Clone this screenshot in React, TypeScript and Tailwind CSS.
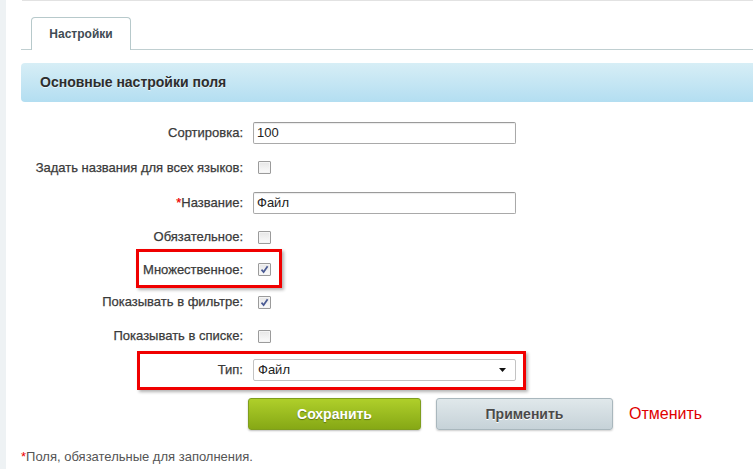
import React from "react";

function Checkbox({ checked = false }: { checked?: boolean }) {
  return (
    <div className="ml-[5px] w-[13px] h-[13px] border border-[#9b9b9b] rounded-[1px] bg-gradient-to-b from-[#e6e6e6] to-[#fbfbfb] flex items-center justify-center shadow-[inset_0_0_0_1px_#f4f4f4]">
      {checked && (
        <svg width="9" height="9" viewBox="0 0 9 9">
          <path d="M1.5 4.6 L3.6 7 L7.6 1.2" fill="none" stroke="#4a5a93" strokeWidth="1.7" />
        </svg>
      )}
    </div>
  );
}

function TextInput({ value }: { value: string }) {
  return (
    <div className="w-[263px] h-[22px] border border-[#a9a9a9] border-t-[#9a9a9a] rounded-[2px] bg-white flex items-center pl-[3px] text-[13px] text-[#222] shadow-[inset_0_1px_1px_rgba(0,0,0,0.08)]">
      {value}
    </div>
  );
}

function Row({ label, h, children, req = false }: { label: string; h: string; children: React.ReactNode; req?: boolean }) {
  return (
    <div className={`flex items-center ${h}`}>
      <div className="w-[222px] text-right text-[13px] text-[#3a3a3a] [-webkit-text-stroke:0.25px_#3a3a3a] [text-shadow:0_1px_0_#fff]">
        {req && <span className="text-[#e00] [-webkit-text-stroke:0.25px_#e00]">*</span>}
        {label}
      </div>
      <div className="ml-[10px] flex items-center">{children}</div>
    </div>
  );
}

export default function App() {
  return (
    <div className="relative flex w-[753px] h-[469px] bg-white overflow-hidden font-['Liberation_Sans',Arial,sans-serif]">
      <div className="w-[6px] bg-[#eef2f4] shrink-0" />
      <div className="flex-1 pl-[15px]">
        <div className="h-px bg-[#e2e2e2] ml-[1px]" />
        <div className="h-[49px] border-b border-[#c0cfd1] flex items-end">
          <div className="ml-[10px] w-[100px] h-[33px] -mb-px border border-b-0 border-[#b7c9cb] rounded-t-[4px] bg-white flex items-center justify-center text-[12px] font-bold text-[#3f4b54] relative">
            Настройки
          </div>
        </div>
        <div className="mt-[13px] h-[39px] rounded-l-[4px] bg-gradient-to-b from-[#d7eef6] to-[#b3def1] flex items-center pl-[19px] text-[14px] font-bold text-[#2d2d2d] [text-shadow:0_1px_0_rgba(255,255,255,0.6)]">
          Основные настройки поля
        </div>
        <div className="mt-[13px]">
          <Row label="Сортировка:" h="h-[35px]">
            <TextInput value="100" />
          </Row>
          <Row label="Задать названия для всех языков:" h="h-[35px]">
            <Checkbox />
          </Row>
          <Row label="Название:" h="h-[35px]" req>
            <TextInput value="Файл" />
          </Row>
          <Row label="Обязательное:" h="h-[34px]">
            <Checkbox />
          </Row>
          <Row label="Множественное:" h="h-[31px]">
            <Checkbox checked />
          </Row>
          <Row label="Показывать в фильтре:" h="h-[34px]">
            <Checkbox checked />
          </Row>
          <Row label="Показывать в списке:" h="h-[34px]">
            <Checkbox />
          </Row>
          <Row label="Тип:" h="h-[34px]">
            <div className="w-[263px] h-[22px] border border-[#c3c3c3] rounded-[2px] bg-white flex items-center justify-between pl-[4px] pr-[9px] text-[13px] text-[#222]">
              <span>Файл</span>
              <svg width="7" height="4" viewBox="0 0 7 4">
                <path d="M0 0 H7 L3.5 4 Z" fill="#111" />
              </svg>
            </div>
          </Row>
        </div>
        <div className="flex items-center mt-[11px] ml-[227px]">
          <button className="w-[173px] h-[32px] rounded-[3px] border border-[#7f9e1d] bg-gradient-to-b from-[#afcf2a] to-[#86a815] text-white text-[14px] font-bold [text-shadow:0_1px_1px_rgba(0,0,0,0.35)] shadow-[0_1px_2px_rgba(0,0,0,0.25)]">
            Сохранить
          </button>
          <button className="ml-[15px] w-[177px] h-[32px] rounded-[3px] border border-[#a9b7bd] bg-gradient-to-b from-[#e0e8eb] to-[#c6d2d8] text-[#4a4a4a] text-[14px] font-bold [text-shadow:0_1px_0_#fff] shadow-[0_1px_2px_rgba(0,0,0,0.2)]">
            Применить
          </button>
          <span className="ml-[16px] text-[16px] text-[#e00000]">Отменить</span>
        </div>
        <div className="mt-[17px] text-[13px] text-[#555]">
          <span className="text-[#e00]">*</span>Поля, обязательные для заполнения.
        </div>
      </div>
      <div className="absolute left-[136px] top-[249px] w-[146px] h-[39px] border-[3px] border-[#f00000] shadow-[2px_2px_3px_rgba(0,0,0,0.3)]" />
      <div className="absolute left-[137px] top-[351px] w-[389px] h-[39px] border-[3px] border-[#f00000] shadow-[2px_2px_3px_rgba(0,0,0,0.3)]" />
    </div>
  );
}
